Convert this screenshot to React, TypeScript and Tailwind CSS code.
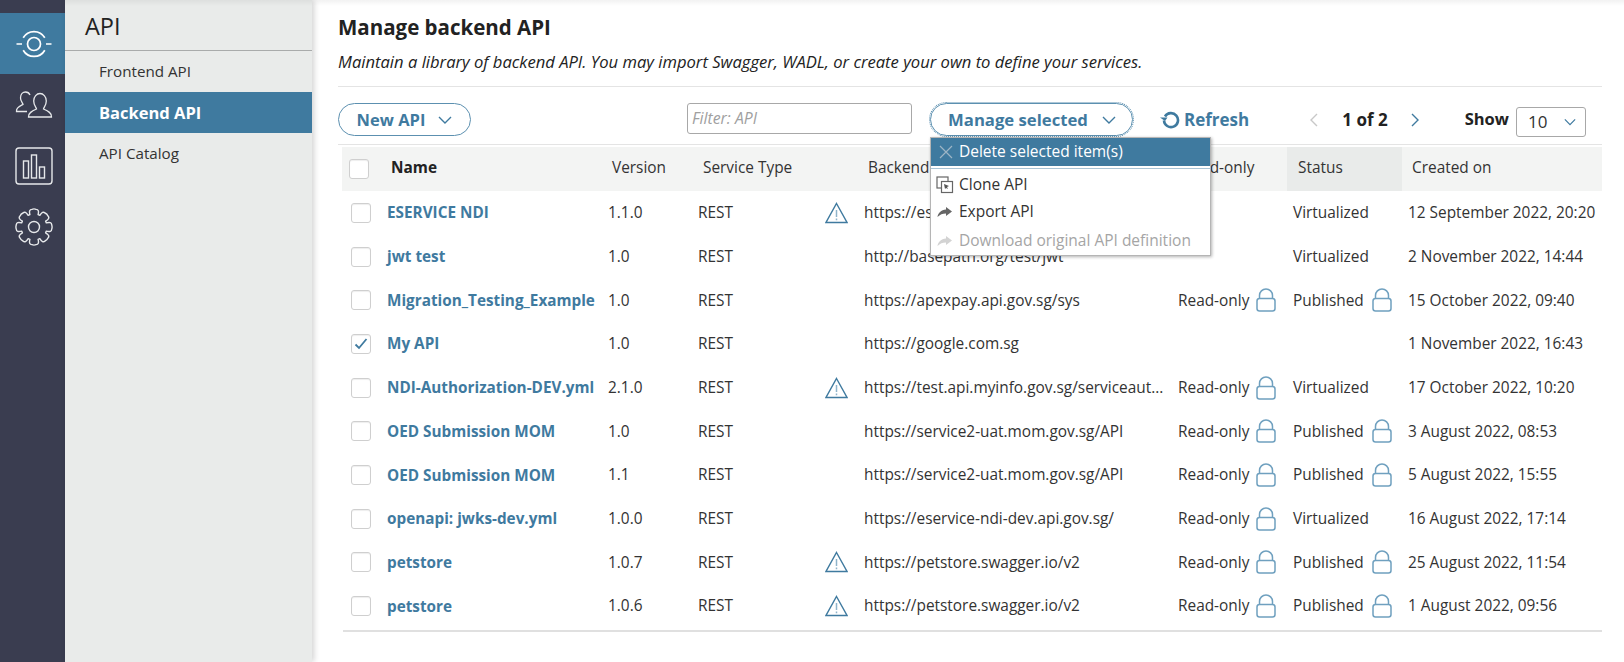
import React from "react";

const Warn = () => (
  <svg width="23" height="22" viewBox="0 0 23 22" fill="none" stroke="#3f7a9f" strokeWidth="1.4">
    <path d="M11.500 1.500 L22 20.500 H1 Z" strokeLinejoin="miter" />
    <path d="M11.500 8v7M11.500 16.500v1.800" stroke="#8fb4cb" strokeWidth="1.500" />
  </svg>
);

const Lock = () => (
  <svg width="20" height="24" viewBox="0 0 20 24" fill="none" stroke="#6fa0bf" strokeWidth="1.500">
    <path d="M3.500 10.500 V7.500 a6.500 6.500 0 0 1 13 0 V10.500" />
    <rect x="1" y="10.500" width="18" height="12.500" rx="2.500" />
  </svg>
);

const Chev = ({ color = "#3f7a9f", w = 14 }: { color?: string; w?: number }) => (
  <svg width={w} height="8" viewBox="0 0 14 8" fill="none" stroke={color} strokeWidth="1.400">
    <path d="M1 1l6 6 6-6" />
  </svg>
);

const Check = ({ on }: { on?: boolean }) => (
  <span className="flex h-[20px] w-[20px] items-center justify-center rounded-[3px] border border-[#cfcfcf] bg-white shadow-[inset_0_1px_1px_#eeeeee]">
    {on && (
      <svg width="14" height="12" viewBox="0 0 14 12" fill="none" stroke="#3f7a9f" strokeWidth="1.800">
        <path d="M1.500 6.500l3.500 3.500 7.500-9" />
      </svg>
    )}
  </span>
);

type Row = {
  name: string;
  ver: string;
  warn?: boolean;
  url: string;
  ro?: boolean;
  status?: string;
  lock?: boolean;
  date: string;
  on?: boolean;
};

const rows: Row[] = [
  { name: "ESERVICE NDI", ver: "1.1.0", warn: true, url: "https://eservice-ndi-dev.api.gov.sg/", status: "Virtualized", date: "12 September 2022, 20:20" },
  { name: "jwt test", ver: "1.0", url: "http://basepath.org/test/jwt", status: "Virtualized", date: "2 November 2022, 14:44" },
  { name: "Migration_Testing_Example", ver: "1.0", url: "https://apexpay.api.gov.sg/sys", ro: true, status: "Published", lock: true, date: "15 October 2022, 09:40" },
  { name: "My API", ver: "1.0", url: "https://google.com.sg", date: "1 November 2022, 16:43", on: true },
  { name: "NDI-Authorization-DEV.yml", ver: "2.1.0", warn: true, url: "https://test.api.myinfo.gov.sg/serviceaut...", ro: true, status: "Virtualized", date: "17 October 2022, 10:20" },
  { name: "OED Submission MOM", ver: "1.0", url: "https://service2-uat.mom.gov.sg/API", ro: true, status: "Published", lock: true, date: "3 August 2022, 08:53" },
  { name: "OED Submission MOM", ver: "1.1", url: "https://service2-uat.mom.gov.sg/API", ro: true, status: "Published", lock: true, date: "5 August 2022, 15:55" },
  { name: "openapi: jwks-dev.yml", ver: "1.0.0", url: "https://eservice-ndi-dev.api.gov.sg/", ro: true, status: "Virtualized", date: "16 August 2022, 17:14" },
  { name: "petstore", ver: "1.0.7", warn: true, url: "https://petstore.swagger.io/v2", ro: true, status: "Published", lock: true, date: "25 August 2022, 11:54" },
  { name: "petstore", ver: "1.0.6", warn: true, url: "https://petstore.swagger.io/v2", ro: true, status: "Published", lock: true, date: "1 August 2022, 09:56" },
];

const gearTeeth = Array.from({ length: 8 }, (_, i) => {
  const base = (i * Math.PI) / 4;
  const pt = (r: number, a: number) => `${(19 + r * Math.cos(base + a)).toFixed(2)} ${(19 + r * Math.sin(base + a)).toFixed(2)}`;
  return `${i === 0 ? "M" : "L"}${pt(13, -0.32)} Q${pt(18.5, -0.3)} ${pt(17.8, -0.12)} Q${pt(18.5, 0)} ${pt(17.8, 0.12)} Q${pt(18.5, 0.3)} ${pt(13, 0.32)}`;
}).join(" ") + " Z";

const Rail = () => (
  <div className="flex w-[65px] shrink-0 flex-col bg-[#3a3d50] pt-[13px]">
    <div className="flex h-[61px] items-center justify-center pl-[2px] bg-[#3f7a9f]">
      <svg width="38" height="30" viewBox="0 0 38 30" fill="none" stroke="#fff" strokeWidth="1.700">
        <circle cx="19" cy="15" r="6.500" />
        <path d="M8.200 8.750A12.500 12.500 0 0 1 29.800 8.750M8.200 21.250A12.500 12.500 0 0 0 29.800 21.250" />
        <path d="M31 15H36.500M1.500 15H7" />
      </svg>
    </div>
    <div className="flex h-[61px] items-center justify-center pl-[2px]">
      <svg width="38" height="27" viewBox="0 0 38 27" fill="none" stroke="#e6e8ea" strokeWidth="1.300">
        <path d="M12 20.500H1.500c-.6-4 3.500-5.500 6.500-7 0-1.500-2.500-3-2.500-6.500C5.500 3 8 1 10.500 1c2 0 3.700 1 4.500 3" />
        <path d="M13.500 26h23c.6-4-3.500-6-8-8 0-1.500 2.800-3.500 2.800-8 0-4.500-3-7.500-6.300-7.500s-6.300 3-6.300 7.500c0 4.500 2.800 6.500 2.800 8-4.500 2-8.500 4-8 8Z" />
      </svg>
    </div>
    <div className="flex h-[61px] items-center justify-center pl-[2px]">
      <svg width="38" height="38" viewBox="0 0 38 38" fill="none" stroke="#e6e8ea" strokeWidth="1.400">
        <rect x="1" y="1" width="36" height="36" rx="3" />
        <rect x="8.500" y="14" width="5" height="17" />
        <rect x="16.500" y="8" width="5" height="23" />
        <rect x="24.500" y="20" width="5" height="11" />
      </svg>
    </div>
    <div className="flex h-[61px] items-center justify-center pl-[2px]">
      <svg width="38" height="38" viewBox="0 0 38 38" fill="none" stroke="#e6e8ea" strokeWidth="1.400" strokeLinejoin="round">
        <path d={gearTeeth} />
        <circle cx="19" cy="19" r="5.500" />
      </svg>
    </div>
  </div>
);

const Sidebar = () => (
  <div className="relative z-10 flex w-[247px] shrink-0 flex-col bg-[#e9ebea] shadow-[2px_0_6px_rgba(0,0,0,0.18)]">
    <div className="flex h-[51px] items-center border-b border-[#a9abab] pl-[20px] pt-[4px] text-[23.500px] leading-none text-[#222]">API</div>
    <div className="flex h-[41px] items-center pl-[34px] text-[15.200px] text-[#333]">Frontend API</div>
    <div className="flex h-[41px] items-center bg-[#3f7a9f] pl-[34px] pt-[1px] text-[16.500px] font-bold text-white">Backend API</div>
    <div className="flex h-[41px] items-center pl-[34px] text-[15.200px] text-[#333]">API Catalog</div>
  </div>
);

const Dropdown = () => (
  <div className="absolute left-0 top-[34px] z-20 w-[281px] border border-[#b5b5b5] bg-white pb-[1px] shadow-[1px_1px_3px_rgba(0,0,0,0.3)]">
    <div className="flex h-[28px] items-center gap-[6px] bg-[#3f7a9f] pl-[8px] text-[15.500px] text-white">
      <svg width="14" height="14" viewBox="0 0 14 14" stroke="#9db5c5" strokeWidth="1.200"><path d="M1 1l12 12M13 1L1 13" /></svg>
      Delete selected item(s)
    </div>
    <div className="mt-[2px] h-px bg-[#a9c4d6]" />
    <div className="mt-[2px] flex h-[27px] items-center gap-[5px] pl-[5px] text-[15.500px] text-[#333]">
      <svg width="18" height="18" viewBox="0 0 18 18" fill="none" stroke="#666" strokeWidth="1.200">
        <rect x="1" y="1" width="11" height="11" />
        <rect x="5.500" y="5.500" width="11" height="11" fill="#fff" />
        <path d="M8 8l5 2-2 1 1 2-2-1-1 1z" fill="#555" stroke="none" />
      </svg>
      Clone API
    </div>
    <div className="flex h-[27px] items-center gap-[7px] pl-[6px] text-[15.500px] text-[#333]">
      <svg width="15" height="12" viewBox="0 0 15 12" fill="#666"><path d="M9 1l6 4.500-6 4.500V7.500C5.500 7.500 3 8.500.5 11c.5-4 3.500-7 8.500-7.500z" /></svg>
      Export API
    </div>
    <div className="flex h-[29px] items-center gap-[7px] pl-[6px] pt-[2px] text-[15.500px] text-[#a5a5a5]">
      <svg width="15" height="12" viewBox="0 0 15 12" fill="#d3d3d3"><path d="M9 1l6 4.500-6 4.500V7.500C5.500 7.500 3 8.500.5 11c.5-4 3.500-7 8.500-7.500z" /></svg>
      Download original API definition
    </div>
  </div>
);

const Toolbar = () => (
  <div className="flex h-[58px] items-start border-b border-[#e4e4e4] pt-[16px]">
    <div className="flex h-[33px] w-[133px] items-center justify-center gap-[13px] rounded-full border border-[#5c90b0] pt-[1px] text-[16.500px] font-bold text-[#3f7a9f]">
      New API <Chev />
    </div>
    <div className="ml-[216px] flex h-[31px] w-[225px] items-center rounded-[3px] border border-[#a8a8a8] pl-[4px] text-[15.800px] italic text-[#a0a0a0]">Filter: API</div>
    <div className="relative ml-[18px] w-[203px]">
      <div className="flex h-[33px] items-center justify-center gap-[14px] rounded-full border border-[#5c90b0] pl-[1px] pt-[1px] text-[16.700px] font-bold text-[#3f7a9f] outline-1 outline-dotted outline-[#5c90b0]">
        Manage selected <Chev />
      </div>
      <Dropdown />
    </div>
    <div className="ml-[27px] flex h-[33px] items-center gap-[4px] text-[17px] font-bold text-[#3f7a9f]">
      <svg width="20" height="18" viewBox="0 0 20 18" fill="none" stroke="#3f7a9f" strokeWidth="2.600">
        <path d="M5 5.500A7 7 0 1 1 4 9.500" />
        <path d="M0 6.500h7.500L5 10z" fill="#3f7a9f" stroke="none" />
      </svg>
      Refresh
    </div>
    <div className="ml-[60px] flex h-[33px] items-center">
      <svg width="10" height="14" viewBox="0 0 10 14" fill="none" stroke="#c8c8c8" strokeWidth="1.400"><path d="M8 1L2 7l6 6" /></svg>
      <span className="ml-[23px] text-[17px] font-bold text-[#222]">1 of 2</span>
      <svg className="ml-[22px]" width="10" height="14" viewBox="0 0 10 14" fill="none" stroke="#3f7a9f" strokeWidth="1.400"><path d="M2 1l6 6-6 6" /></svg>
      <span className="ml-[45px] text-[16.500px] font-bold text-[#222]">Show</span>
    </div>
    <div className="ml-[7px] mt-[4px] flex h-[30px] w-[70px] items-center justify-between rounded-[3px] border border-[#a8a8a8] pl-[11px] pr-[9px] text-[17px] text-[#333]">
      10 <Chev w={12} />
    </div>
  </div>
);

const Header = () => (
  <div className="mt-[2px] ml-[4px] grid h-[44px] grid-cols-[51px_219px_91px_165px_315px_104px_115px_200px] items-stretch bg-[#f3f4f3] text-[15.400px] text-[#333]">
    <div className="flex items-center pl-[7px]"><Check /></div>
    <div className="-ml-[2px] flex items-center pb-[2px] font-bold text-[#222]">Name</div>
    <div className="flex items-center pb-[2px]">Version</div>
    <div className="flex items-center pb-[2px]">Service Type</div>
    <div className="flex items-center pb-[2px]">Backend URL</div>
    <div className="flex items-center pb-[2px]">Read-only</div>
    <div className="flex items-center bg-[#e9ebea] pb-[2px] pl-[11px]">Status</div>
    <div className="flex items-center pb-[2px] pl-[10px]">Created on</div>
  </div>
);

const TableRow = ({ r }: { r: Row }) => (
  <div className="ml-[4px] grid h-[43.700px] grid-cols-[45px_221px_90px_120px_46px_314px_115px_115px_194px] items-center text-[15.400px] text-[#333]">
    <div className="pl-[9px]"><Check on={r.on} /></div>
    <div className="whitespace-nowrap text-[15.300px] font-bold text-[#3f7a9f]">{r.name}</div>
    <div>{r.ver}</div>
    <div>REST</div>
    <div className="flex justify-end pr-[16px]">{r.warn && <Warn />}</div>
    <div className="whitespace-nowrap">{r.url}</div>
    <div className="flex items-center gap-[7px]">{r.ro && <><span>Read-only</span><Lock /></>}</div>
    <div className="flex items-center gap-[8px]">{r.status && <span>{r.status}</span>}{r.lock && <Lock />}</div>
    <div className="whitespace-nowrap">{r.date}</div>
  </div>
);

export default function App() {
  return (
    <div className="relative flex h-[662px] w-[1624px] overflow-hidden bg-white font-['Open_Sans',sans-serif]">
      <Rail />
      <Sidebar />
      <div className="min-w-0 flex-1 pl-[26px] pr-[22px]">
        <h1 className="flex h-[54px] items-center text-[20.500px] font-bold text-[#222]">Manage backend API</h1>
        <p className="whitespace-nowrap text-[16.600px] italic leading-[16px] text-[#222]">Maintain a library of backend API. You may import Swagger, WADL, or create your own to define your services.</p>
        <div className="mt-[16px] h-px bg-[#e4e4e4]" />
        <Toolbar />
        <Header />
        {rows.map((r, i) => <TableRow key={i} r={r} />)}
        <div className="ml-[5px] mt-[2px] h-[2px] bg-[#e0e0e0]" />
      </div>
      <div className="pointer-events-none absolute left-[65px] right-0 top-0 z-30 h-[6px] bg-gradient-to-b from-[rgba(0,0,0,0.05)] to-transparent" />
    </div>
  );
}
